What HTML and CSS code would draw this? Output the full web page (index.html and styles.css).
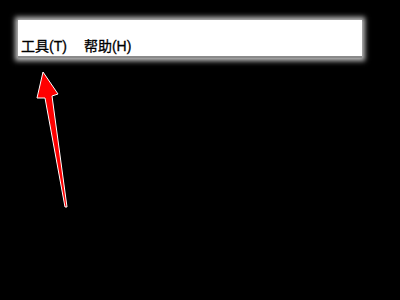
FILE: index.html
```html
<!DOCTYPE html>
<html lang="zh-CN">
<head>
<meta charset="utf-8">
<link rel="stylesheet" href="styles.css">
</head>
<body>
<div class="menubar">
  <span class="item">工具(T)</span>
  <span class="item">帮助(H)</span>
</div>
<svg class="arrow" width="400" height="300" viewBox="0 0 400 300">
  <polygon points="43,72 58,94 52,96 67,207 65,207 45,98 37,98" fill="#ff0000" stroke="#ffffff" stroke-width="1" stroke-linejoin="round"/>
</svg>
</body>
</html>
```
FILE: styles.css
```css
html, body {
  margin: 0;
  padding: 0;
  background: #000;
  width: 400px;
  height: 300px;
  overflow: hidden;
}
body {
  padding-top: 20px;
  box-sizing: border-box;
  position: relative;
}
.menubar {
  margin-left: 18px;
  width: 344px;
  height: 38px;
  box-sizing: border-box;
  padding: 19px 0 0 3px;
  background: #fff;
  border-bottom: 2px solid #8a8a8a;
  box-shadow: 0 0 5px 3px rgba(255,255,255,0.75);
  display: flex;
  gap: 17px;
  font-family: "Liberation Sans", "Noto Sans CJK SC", sans-serif;
  font-size: 14px;
  line-height: 14px;
  color: #000;
}
.item {
  -webkit-text-stroke: 0.3px #000;
}
.arrow {
  position: absolute;
  left: 0;
  top: 0;
}
```
